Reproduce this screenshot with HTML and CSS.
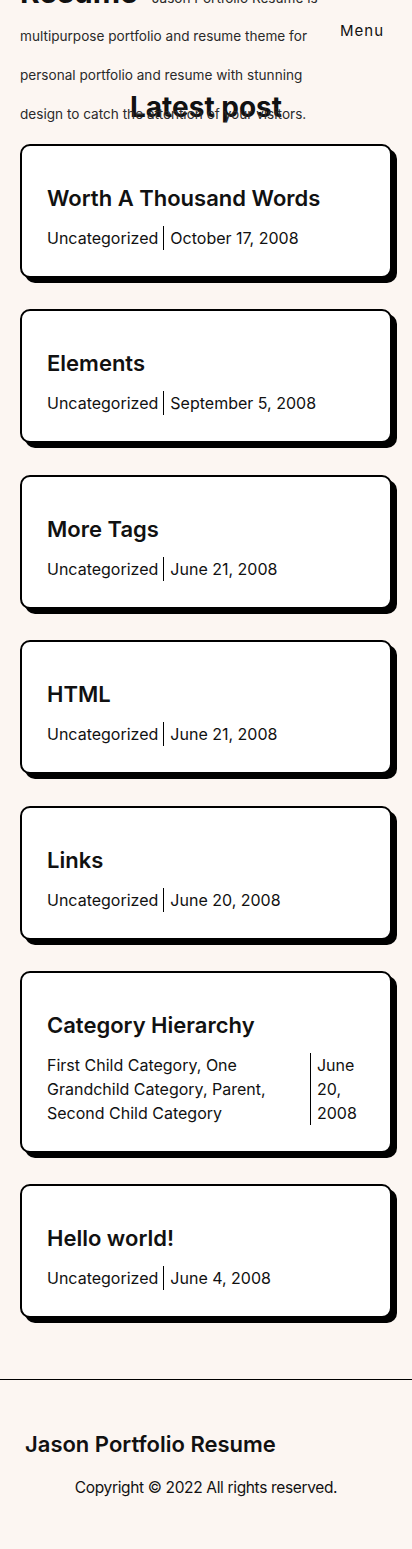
FILE: index.html
```html
<!DOCTYPE html>
<html lang="en">
<head>
<meta charset="utf-8">
<meta name="viewport" content="width=device-width, initial-scale=1">
<title>Jason Portfolio Resume</title>
<link rel="stylesheet" href="styles.css">
</head>
<body>
<header class="site-header">
  <div class="branding">
    <h1 class="site-title">Jason Portfolio Resume</h1>
    <p class="site-desc">Jason Portfolio Resume is multipurpose portfolio and resume theme for personal portfolio and resume with stunning design to catch the attention of your visitors.</p>
  </div>
  <button class="menu-toggle">Menu</button>
</header>

<main class="content">
  <h2 class="section-title">Latest post</h2>

  <article class="card">
    <h3 class="card-title">Worth A Thousand Words</h3>
    <div class="meta"><span class="cats">Uncategorized</span><span class="date">October 17, 2008</span></div>
  </article>

  <article class="card">
    <h3 class="card-title">Elements</h3>
    <div class="meta"><span class="cats">Uncategorized</span><span class="date">September 5, 2008</span></div>
  </article>

  <article class="card">
    <h3 class="card-title">More Tags</h3>
    <div class="meta"><span class="cats">Uncategorized</span><span class="date">June 21, 2008</span></div>
  </article>

  <article class="card">
    <h3 class="card-title">HTML</h3>
    <div class="meta"><span class="cats">Uncategorized</span><span class="date">June 21, 2008</span></div>
  </article>

  <article class="card">
    <h3 class="card-title">Links</h3>
    <div class="meta"><span class="cats">Uncategorized</span><span class="date">June 20, 2008</span></div>
  </article>

  <article class="card">
    <h3 class="card-title">Category Hierarchy</h3>
    <div class="meta"><span class="cats">First Child Category, One Grandchild Category, Parent, Second Child Category</span><span class="date">June 20, 2008</span></div>
  </article>

  <article class="card">
    <h3 class="card-title">Hello world!</h3>
    <div class="meta"><span class="cats">Uncategorized</span><span class="date">June 4, 2008</span></div>
  </article>
</main>

<footer class="site-footer">
  <div class="footer-title">Jason Portfolio Resume</div>
  <p class="copyright">Copyright © 2022 All rights reserved.</p>
</footer>
</body>
</html>
```
FILE: styles.css
```css
* { box-sizing: border-box; }

html, body {
  margin: 0;
  padding: 0;
}

body {
  background: #fcf6f2;
  color: #111;
  font-family: Inter, "Noto Sans", "Liberation Sans", sans-serif;
  position: relative;
}

.site-header {
  position: absolute;
  top: -72px;
  left: 20px;
  right: 20px;
  display: flex;
  justify-content: space-between;
  align-items: flex-start;
}

.branding {
  width: 298px;
  line-height: 38.7px;
  font-size: 13.6px;
  color: #2a2a2a;
}

.site-title {
  display: inline;
  font-size: 30px;
  font-weight: 700;
  color: #111;
  margin: 0 10px 0 0;
  line-height: 38.7px;
}

.site-desc {
  display: inline;
  margin: 0;
}

.menu-toggle {
  margin-top: 93px;
  margin-right: 8px;
  background: none;
  border: 0;
  padding: 0;
  font-family: inherit;
  font-size: 15px;
  letter-spacing: 1px;
  color: #111;
}

.content {
  padding: 90px 20px 0;
}

.section-title {
  margin: 0 0 20px;
  text-align: center;
  font-size: 28px;
  line-height: 34px;
  font-weight: 700;
  color: #111;
}

.card {
  background: #fff;
  border: 2px solid #000;
  border-radius: 10px;
  box-shadow: 5px 5px 0 #000;
  padding: 38px 25px 26px;
  margin-bottom: 31.4px;
}

.card:last-child {
  margin-bottom: 0;
}

.card-title {
  margin: 0 0 13px;
  font-size: 22px;
  line-height: 29px;
  font-weight: 600;
  color: #111;
}

.meta {
  display: flex;
  font-size: 16px;
  line-height: 24px;
  color: #111;
}

.cats {
  padding-right: 5px;
}

.date {
  border-left: 1px solid #000;
  padding-left: 6px;
}

.site-footer {
  margin-top: 61px;
  border-top: 1px solid #000;
  padding: 50px 25px 49px;
}

.footer-title {
  font-size: 22px;
  line-height: 29px;
  font-weight: 600;
  color: #111;
}

.copyright {
  margin: 17px 0 0;
  text-align: center;
  font-size: 15.5px;
  letter-spacing: -0.35px;
  line-height: 24px;
  color: #111;
}
```
